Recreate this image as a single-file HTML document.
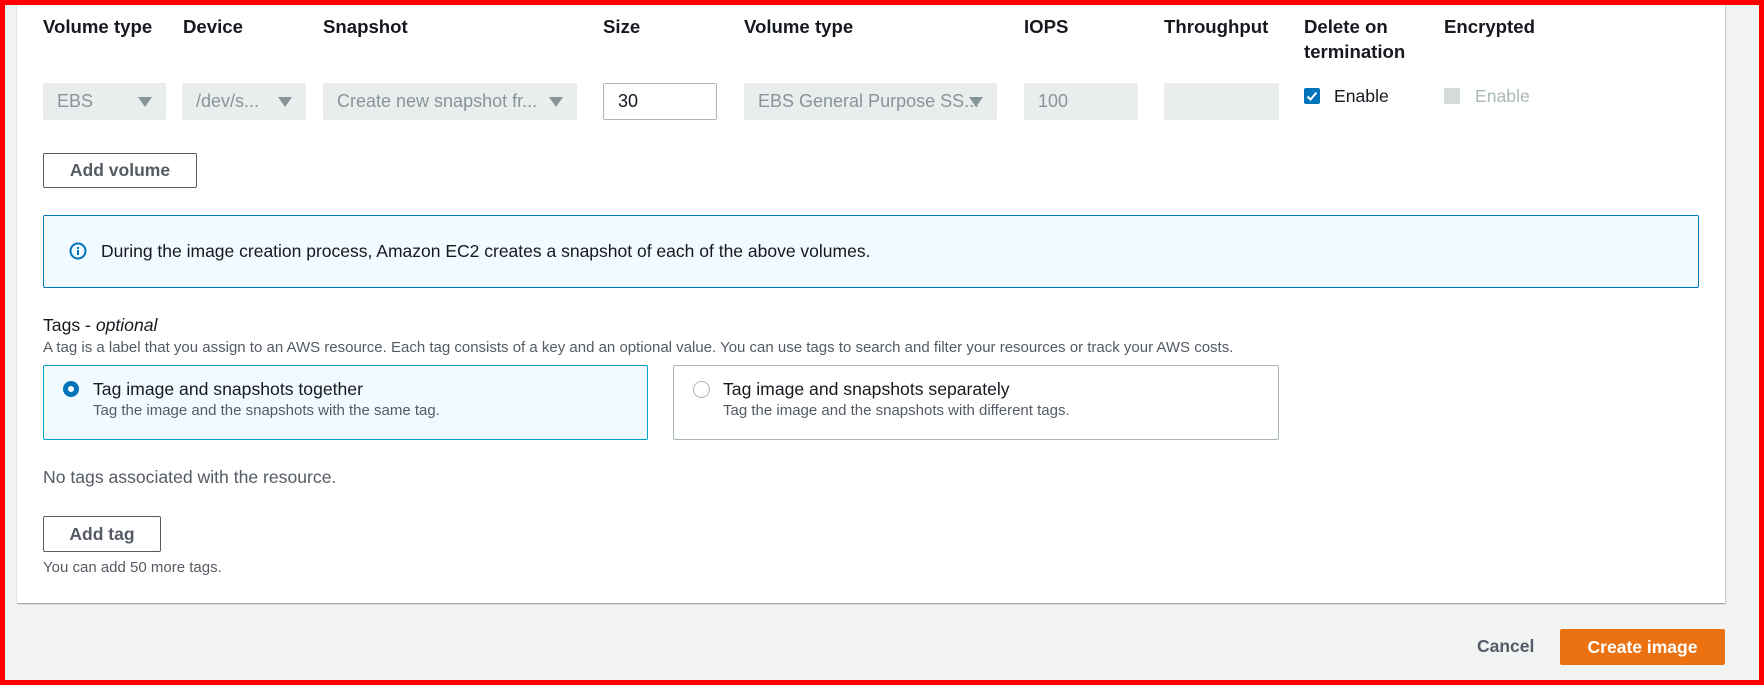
<!DOCTYPE html>
<html><head><style>
*{margin:0;padding:0;box-sizing:border-box}
body{width:1764px;height:685px;overflow:hidden;background:#f2f3f3;font-family:"Liberation Sans",sans-serif;color:#16191f;position:relative}
.frame{position:absolute;inset:0;border:5px solid #f00;border-top-width:5px;z-index:10;pointer-events:none}
.card{position:absolute;left:17px;top:0;width:1708px;height:603px;background:#fff;box-shadow:0 1px 1px 0 rgba(0,28,36,.3),1px 1px 1px 0 rgba(0,28,36,.15)}
.a{position:absolute;white-space:nowrap}
.h{font-weight:bold;font-size:18.6px;line-height:25px;top:14px}
.in{position:absolute;top:83px;height:37px;background:#eaeded;border-radius:2px;color:#879596;font-size:18px;line-height:37px;padding-left:14px;white-space:nowrap;overflow:hidden}
.tri{position:absolute;right:14px;top:14px;width:0;height:0;border-left:7px solid transparent;border-right:7px solid transparent;border-top:10px solid #879596}
.btn{position:absolute;border:1px solid #545b64;border-radius:2px;background:#fff;font-weight:bold;font-size:17.5px;color:#545b64;text-align:center}
.small{font-size:15px;color:#545b64}
.t{font-size:17.6px}
</style></head><body>
<div class="frame"></div>
<div class="card"></div>
<div class="a h" style="left:43px">Volume type</div>
<div class="a h" style="left:183px">Device</div>
<div class="a h" style="left:323px">Snapshot</div>
<div class="a h" style="left:603px">Size</div>
<div class="a h" style="left:744px">Volume type</div>
<div class="a h" style="left:1024px">IOPS</div>
<div class="a h" style="left:1164px">Throughput</div>
<div class="a h" style="left:1304px">Delete on<br>termination</div>
<div class="a h" style="left:1444px">Encrypted</div>

<div class="in" style="left:43px;width:123px">EBS<span class="tri"></span></div>
<div class="in" style="left:182px;width:124px">/dev/s...<span class="tri"></span></div>
<div class="in" style="left:323px;width:254px">Create new snapshot fr...<span class="tri"></span></div>
<div class="in" style="left:603px;width:114px;background:#fff;border:1px solid #aab7b8;color:#16191f;line-height:35px">30</div>
<div class="in" style="left:744px;width:253px;padding-right:36px">EBS General Purpose SS...<span class="tri"></span></div>
<div class="in" style="left:1024px;width:114px">100</div>
<div class="in" style="left:1164px;width:115px"></div>
<div class="a" style="left:1304px;top:88px;width:16px;height:16px;background:#0073bb;border-radius:2px">
<svg width="16" height="16" viewBox="0 0 16 16"><path d="M3.5 8.5l3 3 6-7" fill="none" stroke="#fff" stroke-width="2"/></svg></div>
<div class="a t" style="left:1334px;top:84px;line-height:24px">Enable</div>
<div class="a" style="left:1444px;top:88px;width:16px;height:16px;background:#d5dbdb;border-radius:2px"></div>
<div class="a t" style="left:1475px;top:84px;line-height:24px;color:#aab7b8">Enable</div>

<div class="btn" style="left:43px;top:153px;width:154px;height:35px;line-height:33px">Add volume</div>

<div class="a" style="left:43px;top:215px;width:1656px;height:73px;background:#f1faff;border:1px solid #0073bb;border-radius:2px"></div>
<svg class="a" style="left:69px;top:242px" width="18" height="18" viewBox="0 0 18 18"><circle cx="9" cy="9" r="7.5" fill="none" stroke="#0073bb" stroke-width="2"/><rect x="8" y="8" width="2" height="5" fill="#0073bb"/><rect x="8" y="5" width="2" height="2" fill="#0073bb"/></svg>
<div class="a" style="left:101px;top:240px;font-size:17.5px;line-height:22px">During the image creation process, Amazon EC2 creates a snapshot of each of the above volumes.</div>

<div class="a t" style="left:43px;top:314px;line-height:22px">Tags - <i>optional</i></div>
<div class="a small" style="left:43px;top:339px;line-height:18px">A tag is a label that you assign to an AWS resource. Each tag consists of a key and an optional value. You can use tags to search and filter your resources or track your AWS costs.</div>

<div class="a" style="left:43px;top:365px;width:605px;height:75px;background:#f1faff;border:1px solid #00a1c9;border-radius:2px"></div>
<div class="a" style="left:63px;top:381px;width:16px;height:16px;border-radius:50%;border:5px solid #0073bb;background:#fff"></div>
<div class="a t" style="left:93px;top:378px;line-height:22px">Tag image and snapshots together</div>
<div class="a small" style="left:93px;top:402px;line-height:18px">Tag the image and the snapshots with the same tag.</div>

<div class="a" style="left:673px;top:365px;width:606px;height:75px;background:#fff;border:1px solid #aab7b8;border-radius:2px"></div>
<div class="a" style="left:693px;top:381px;width:17px;height:17px;border-radius:50%;border:1.5px solid #aab7b8;background:#fff"></div>
<div class="a t" style="left:723px;top:378px;line-height:22px">Tag image and snapshots separately</div>
<div class="a small" style="left:723px;top:402px;line-height:18px">Tag the image and the snapshots with different tags.</div>

<div class="a t" style="left:43px;top:466px;line-height:22px;color:#545b64">No tags associated with the resource.</div>
<div class="btn" style="left:43px;top:516px;width:118px;height:36px;line-height:34px">Add tag</div>
<div class="a small" style="left:43px;top:559px;line-height:18px">You can add 50 more tags.</div>

<div class="a" style="left:1477px;top:635px;font-size:17.5px;font-weight:bold;color:#545b64;line-height:22px">Cancel</div>
<div class="a" style="left:1560px;top:629px;width:165px;height:36px;background:#ec7211;border-radius:2px;color:#fff;font-weight:bold;font-size:17.5px;line-height:36px;text-align:center">Create image</div>
</body></html>
